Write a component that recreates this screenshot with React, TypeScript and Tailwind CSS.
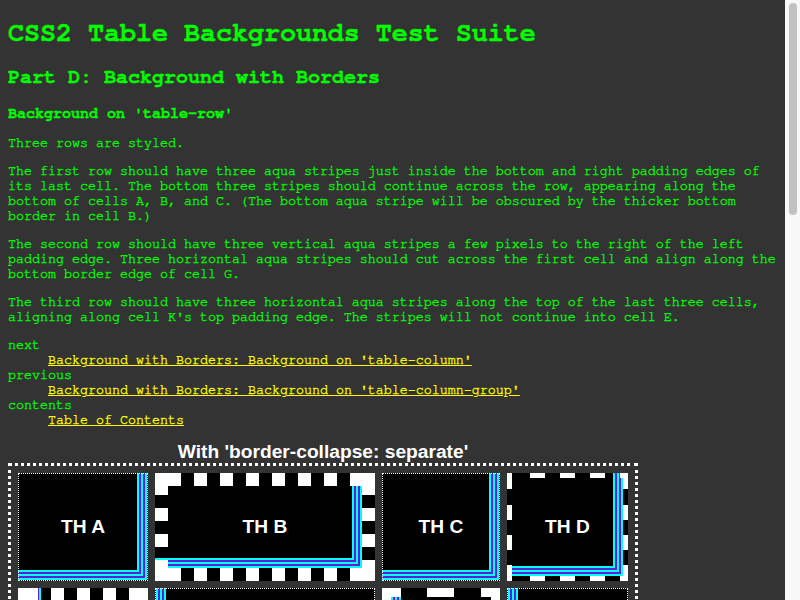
import React from "react";

/* ---------- row 1 cells: L-shaped stripes at bottom-right padding edges ---------- */

const CELL_A =
  "border border-dotted border-white bg-black bg-no-repeat [background-origin:border-box] [background-size:200%_200%] [background-position:right_11px_bottom_11px,right_9px_bottom_9px,right_7px_bottom_7px,right_5px_bottom_5px,right_3px_bottom_3px,right_1px_bottom_1px] [background-image:linear-gradient(#000,#000),linear-gradient(#0ff,#0ff),linear-gradient(#5b1fd6,#5b1fd6),linear-gradient(#0ff,#0ff),linear-gradient(#5b1fd6,#5b1fd6),linear-gradient(#0ff,#0ff)]";

const CELL_B =
  "border-[13px] border-transparent bg-black bg-no-repeat [background-origin:border-box] [background-size:13px_100%,13px_100%,100%_13px,100%_13px,200%_200%,200%_200%,200%_200%,200%_200%,200%_200%,200%_200%] [background-position:left_top,right_top,left_top,left_bottom,right_23px_bottom_23px,right_21px_bottom_21px,right_19px_bottom_19px,right_17px_bottom_17px,right_15px_bottom_15px,right_13px_bottom_13px] [background-image:linear-gradient(to_bottom,#fff_0px_22px,transparent_22px_35px,#fff_35px_48px,transparent_48px_61px,#fff_61px_74px,transparent_74px_87px,#fff_87px),linear-gradient(to_bottom,#fff_0px_22px,transparent_22px_35px,#fff_35px_48px,transparent_48px_61px,#fff_61px_74px,transparent_74px_87px,#fff_87px),linear-gradient(to_right,#fff_0px_26px,transparent_26px_39px,#fff_39px_52px,transparent_52px_65px,#fff_65px_78px,transparent_78px_91px,#fff_91px_104px,transparent_104px_117px,#fff_117px_130px,transparent_130px_143px,#fff_143px_156px,transparent_156px_169px,#fff_169px_182px,transparent_182px_195px,#fff_195px),linear-gradient(to_right,#fff_0px_26px,transparent_26px_39px,#fff_39px_52px,transparent_52px_65px,#fff_65px_78px,transparent_78px_91px,#fff_91px_104px,transparent_104px_117px,#fff_117px_130px,transparent_130px_143px,#fff_143px_156px,transparent_156px_169px,#fff_169px_182px,transparent_182px_195px,#fff_195px),linear-gradient(#000,#000),linear-gradient(#0ff,#0ff),linear-gradient(#5b1fd6,#5b1fd6),linear-gradient(#0ff,#0ff),linear-gradient(#5b1fd6,#5b1fd6),linear-gradient(#0ff,#0ff)]";

const CELL_C = CELL_A;

const CELL_D =
  "border-[5px] border-transparent bg-black bg-no-repeat [background-origin:border-box] [background-size:5px_100%,5px_100%,100%_5px,100%_5px,200%_200%,200%_200%,200%_200%,200%_200%,200%_200%,200%_200%] [background-position:left_top,right_top,left_top,left_bottom,right_15px_bottom_15px,right_13px_bottom_13px,right_11px_bottom_11px,right_9px_bottom_9px,right_7px_bottom_7px,right_5px_bottom_5px] [background-image:linear-gradient(to_bottom,#fff_0px_16px,transparent_16px_32px,#fff_32px_47px,transparent_47px_62px,#fff_62px_77px,transparent_77px_92px,#fff_92px),linear-gradient(to_bottom,#fff_0px_16px,transparent_16px_32px,#fff_32px_47px,transparent_47px_62px,#fff_62px_77px,transparent_77px_92px,#fff_92px),linear-gradient(to_right,#fff_0px_5px,transparent_5px_23px,#fff_23px_38px,transparent_38px_53px,#fff_53px_68px,transparent_68px_83px,#fff_83px_98px,transparent_98px_113px,#fff_113px),linear-gradient(to_right,#fff_0px_5px,transparent_5px_23px,#fff_23px_38px,transparent_38px_53px,#fff_53px_68px,transparent_68px_83px,#fff_83px_98px,transparent_98px_113px,#fff_113px),linear-gradient(#000,#000),linear-gradient(#0ff,#0ff),linear-gradient(#5b1fd6,#5b1fd6),linear-gradient(#0ff,#0ff),linear-gradient(#5b1fd6,#5b1fd6),linear-gradient(#0ff,#0ff)]";

/* ---------- row 2 cells: vertical stripes at the left padding edge ---------- */

const CELL_E =
  "border-[13px] border-transparent bg-black bg-no-repeat [background-origin:border-box] [background-size:13px_100%,13px_100%,100%_13px,100%_13px,10px_100%] [background-position:left_top,right_top,left_top,left_bottom,left_13px_top] [background-image:linear-gradient(to_bottom,#fff_0px_22px,transparent_22px_35px,#fff_35px_48px,transparent_48px_61px,#fff_61px_74px,transparent_74px_87px,#fff_87px),linear-gradient(to_bottom,#fff_0px_22px,transparent_22px_35px,#fff_35px_48px,transparent_48px_61px,#fff_61px_74px,transparent_74px_87px,#fff_87px),linear-gradient(to_right,#fff_0px_20px,transparent_20px_33px,#fff_33px_46px,transparent_46px_59px,#fff_59px_72px,transparent_72px_85px,#fff_85px_98px,transparent_98px_111px,#fff_111px),linear-gradient(to_right,#fff_0px_20px,transparent_20px_33px,#fff_33px_46px,transparent_46px_59px,#fff_59px_72px,transparent_72px_85px,#fff_85px_98px,transparent_98px_111px,#fff_111px),linear-gradient(to_right,#0ff_0px_2px,#5b1fd6_2px_4px,#0ff_4px_6px,#5b1fd6_6px_8px,#0ff_8px_10px)]";

const CELL_F =
  "border border-dotted border-white bg-black bg-no-repeat [background-origin:border-box] [background-size:10px_100%] [background-position:left_1px_top] [background-image:linear-gradient(to_right,#0ff_0px_2px,#5b1fd6_2px_4px,#0ff_4px_6px,#5b1fd6_6px_8px,#0ff_8px_10px)]";

const CELL_G =
  "border-[9px] border-transparent bg-black bg-no-repeat [background-origin:border-box] [background-size:9px_100%,9px_100%,100%_9px,100%_9px,10px_100%] [background-position:left_top,right_top,left_top,left_bottom,left_9px_top] [background-image:linear-gradient(to_bottom,#fff_0px_19px,transparent_19px_40px,#fff_40px_68px,transparent_68px_89px,#fff_89px),linear-gradient(to_bottom,#fff_0px_19px,transparent_19px_40px,#fff_40px_68px,transparent_68px_89px,#fff_89px),linear-gradient(to_right,#fff_0px_19px,transparent_19px_45px,#fff_45px_72px,transparent_72px_99px,#fff_99px),linear-gradient(to_right,#fff_0px_19px,transparent_19px_45px,#fff_45px_72px,transparent_72px_99px,#fff_99px),linear-gradient(to_right,#0ff_0px_2px,#5b1fd6_2px_4px,#0ff_4px_6px,#5b1fd6_6px_8px,#0ff_8px_10px)]";

const CELL_H = CELL_F;

/* ---------- row 3 cells: horizontal stripes along the top ---------- */

const CELL_I = "border border-dotted border-white bg-black";

const CELL_J =
  "border-[5px] border-dashed border-white bg-black bg-no-repeat [background-size:200%_10px] [background-position:right_top] [background-image:linear-gradient(to_bottom,#0ff_0px_2px,#5b1fd6_2px_4px,#0ff_4px_6px,#5b1fd6_6px_8px,#0ff_8px_10px)]";

const CELL_K =
  "border-[13px] border-dashed border-white bg-black bg-no-repeat [background-size:200%_10px] [background-position:right_top] [background-image:linear-gradient(to_bottom,#0ff_0px_2px,#5b1fd6_2px_4px,#0ff_4px_6px,#5b1fd6_6px_8px,#0ff_8px_10px)]";

const CELL_L =
  "border border-dotted border-white bg-black bg-no-repeat [background-size:200%_10px] [background-position:right_top] [background-image:linear-gradient(to_bottom,#0ff_0px_2px,#5b1fd6_2px_4px,#0ff_4px_6px,#5b1fd6_6px_8px,#0ff_8px_10px)]";

function Cell({ label, cls }: { label: string; cls: string }) {
  return (
    <div
      className={
        "flex h-[108px] items-center justify-center font-['Liberation_Sans',Arial,sans-serif] text-[19.2px] font-bold text-white [-webkit-text-stroke:0px] " +
        cls
      }
    >
      {label}
    </div>
  );
}

function Scrollbar() {
  return (
    <div className="flex h-screen w-[15px] shrink-0 justify-center bg-[#f8f8f8] pt-[3px]">
      <div className="h-[212px] w-[8px] rounded-full bg-[#c1c1c1]" />
    </div>
  );
}

export default function App() {
  return (
    <div className="flex h-screen overflow-hidden bg-[#333333]">
      <div className="flex min-w-0 flex-1 flex-col overflow-hidden px-2 pt-[18px] font-['Nimbus_Mono_PS','Nimbus_Mono_L','FreeMono','Courier_10_Pitch',Courier,'Courier_New','Liberation_Mono',monospace] text-[13.33px] leading-[15px] text-[#00ff00] [-webkit-text-stroke:0.35px_currentColor]">
        <h1 className="text-[26.67px] font-bold leading-[30px]">CSS2 Table Backgrounds Test Suite</h1>
        <h2 className="mt-[17.7px] text-[20px] font-bold leading-[23px]">Part D: Background with Borders</h2>
        <h3 className="mt-[16.3px] text-[15px] font-bold leading-[17px]">Background on 'table-row'</h3>
        <p className="mt-[14.5px]">Three rows are styled.</p>
        <p className="mt-[13px]">
          The first row should have three aqua stripes just inside the bottom and right padding edges of its
          last cell. The bottom three stripes should continue across the row, appearing along the bottom of
          cells A, B, and C. (The bottom aqua stripe will be obscured by the thicker bottom border in cell B.)
        </p>
        <p className="mt-[13px]">
          The second row should have three vertical aqua stripes a few pixels to the right of the left padding
          edge. Three horizontal aqua stripes should cut across the first cell and align along the bottom
          border edge of cell G.
        </p>
        <p className="mt-[13px]">
          The third row should have three horizontal aqua stripes along the top of the last three cells,
          aligning along cell K's top padding edge. The stripes will not continue into cell E.
        </p>
        <dl className="mt-[13px]">
          <dt>next</dt>
          <dd className="ml-10">
            <a href="#" className="text-[#ffff00] underline">
              Background with Borders: Background on 'table-column'
            </a>
          </dd>
          <dt>previous</dt>
          <dd className="ml-10">
            <a href="#" className="text-[#ffff00] underline">
              Background with Borders: Background on 'table-column-group'
            </a>
          </dd>
          <dt>contents</dt>
          <dd className="ml-10">
            <a href="#" className="text-[#ffff00] underline">
              Table of Contents
            </a>
          </dd>
        </dl>

        <div className="mt-[12.5px] flex w-[630px] shrink-0 flex-col">
          <div className="text-center font-['Liberation_Sans',Arial,sans-serif] text-[19.2px] font-bold leading-[22px] text-white [-webkit-text-stroke:0px]">
            With 'border-collapse: separate'
          </div>
          <div className="grid grid-cols-[130px_220px_118px_121px] gap-[7px] border-[3px] border-dotted border-white p-[7px]">
            <Cell label="TH A" cls={CELL_A} />
            <Cell label="TH B" cls={CELL_B} />
            <Cell label="TH C" cls={CELL_C} />
            <Cell label="TH D" cls={CELL_D} />
            <Cell label="TD E" cls={CELL_E} />
            <Cell label="TD F" cls={CELL_F} />
            <Cell label="TD G" cls={CELL_G} />
            <Cell label="TD H" cls={CELL_H} />
            <Cell label="TD I" cls={CELL_I} />
            <Cell label="TD J" cls={CELL_J} />
            <Cell label="TD K" cls={CELL_K} />
            <Cell label="TD L" cls={CELL_L} />
          </div>
        </div>
      </div>
      <Scrollbar />
    </div>
  );
}
